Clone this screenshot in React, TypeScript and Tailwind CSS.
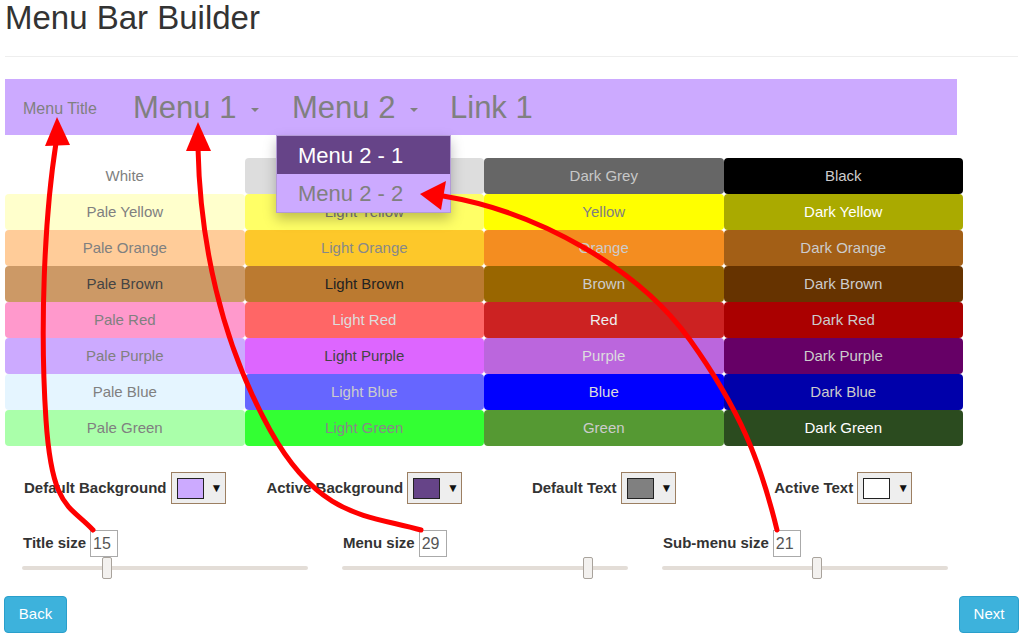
import React from "react";

type Cell = { name: string; bg: string; fg: string };

const cells: Cell[] = [
  { name: "White", bg: "bg-[#ffffff]", fg: "text-[#808080]" },
  { name: "Light Grey", bg: "bg-[#dddddd]", fg: "text-[#808080]" },
  { name: "Dark Grey", bg: "bg-[#666666]", fg: "text-[#c8c8c8]" },
  { name: "Black", bg: "bg-[#000000]", fg: "text-[#cccccc]" },
  { name: "Pale Yellow", bg: "bg-[#ffffcc]", fg: "text-[#808080]" },
  { name: "Light Yellow", bg: "bg-[#ffff66]", fg: "text-[#808080]" },
  { name: "Yellow", bg: "bg-[#ffff00]", fg: "text-[#808080]" },
  { name: "Dark Yellow", bg: "bg-[#aaaa00]", fg: "text-[#ffffff]" },
  { name: "Pale Orange", bg: "bg-[#ffcc99]", fg: "text-[#808080]" },
  { name: "Light Orange", bg: "bg-[#fdc82a]", fg: "text-[#888888]" },
  { name: "Orange", bg: "bg-[#f48d20]", fg: "text-[#cccccc]" },
  { name: "Dark Orange", bg: "bg-[#a35f16]", fg: "text-[#cccccc]" },
  { name: "Pale Brown", bg: "bg-[#cc9966]", fg: "text-[#444444]" },
  { name: "Light Brown", bg: "bg-[#bb7a30]", fg: "text-[#222222]" },
  { name: "Brown", bg: "bg-[#996600]", fg: "text-[#cccccc]" },
  { name: "Dark Brown", bg: "bg-[#663300]", fg: "text-[#cccccc]" },
  { name: "Pale Red", bg: "bg-[#ff99cc]", fg: "text-[#808080]" },
  { name: "Light Red", bg: "bg-[#ff6666]", fg: "text-[#dddddd]" },
  { name: "Red", bg: "bg-[#cc2222]", fg: "text-[#eeeeee]" },
  { name: "Dark Red", bg: "bg-[#aa0000]", fg: "text-[#cccccc]" },
  { name: "Pale Purple", bg: "bg-[#ccaaff]", fg: "text-[#808080]" },
  { name: "Light Purple", bg: "bg-[#dd66ff]", fg: "text-[#444444]" },
  { name: "Purple", bg: "bg-[#bb66dd]", fg: "text-[#dddddd]" },
  { name: "Dark Purple", bg: "bg-[#660066]", fg: "text-[#cccccc]" },
  { name: "Pale Blue", bg: "bg-[#e5f5ff]", fg: "text-[#808080]" },
  { name: "Light Blue", bg: "bg-[#6666ff]", fg: "text-[#cccccc]" },
  { name: "Blue", bg: "bg-[#0000ff]", fg: "text-[#dddddd]" },
  { name: "Dark Blue", bg: "bg-[#0000aa]", fg: "text-[#cccccc]" },
  { name: "Pale Green", bg: "bg-[#aaffaa]", fg: "text-[#808080]" },
  { name: "Light Green", bg: "bg-[#33ff33]", fg: "text-[#888888]" },
  { name: "Green", bg: "bg-[#559933]", fg: "text-[#cccccc]" },
  { name: "Dark Green", bg: "bg-[#2b4b1f]", fg: "text-[#ffffff]" },
];

function Caret() {
  return (
    <span className="inline-block w-0 h-0 border-t-[4px] border-t-[#808080] border-x-[4px] border-x-transparent ml-[15px] mt-[2px]" />
  );
}

function ColorPick({ label, swatch }: { label: string; swatch: string }) {
  return (
    <div className="flex items-center justify-center gap-[4px]">
      <span className="font-bold text-[15px] text-[#333]">{label}</span>
      <div className="w-[55px] h-[32px] border border-[#9c7f62] bg-[#eeeeee] flex items-center pl-[5px]">
        <div className={`w-[27px] h-[21px] border border-[#222] ${swatch}`} />
        <span className="ml-[7px] text-[12px] text-[#111] leading-none">▼</span>
      </div>
    </div>
  );
}

function SizeSlider({ label, value, thumb }: { label: string; value: string; thumb: string }) {
  return (
    <div className="px-[17px]">
      <div className="flex items-center h-[27px] pl-[1px] gap-[4px]">
        <span className="font-bold text-[15px] text-[#333]">{label}</span>
        <div className="w-[28px] h-[27px] border border-[#aaaaaa] text-[16px] text-[#555] pl-[2px] flex items-center">
          {value}
        </div>
      </div>
      <div className="relative h-[22px]">
        <div className="absolute left-0 right-0 top-[9px] h-[4px] bg-[#e3ddd7] rounded-[2px]" />
        <div className={`absolute top-0 w-[10px] h-[22px] bg-[#f3f1ef] border border-[#a9a39c] rounded-[2px] ${thumb}`} />
      </div>
    </div>
  );
}

export default function App() {
  return (
    <div className="relative w-[1023px] h-[636px] overflow-hidden bg-white px-[5px] font-['Liberation_Sans',Arial,sans-serif]">
      <h1 className="text-[33px] leading-[36px] text-[#333] font-normal">Menu Bar Builder</h1>
      <div className="mt-[20px] border-t border-[#eeeeee]" />

      <div className="mt-[22px] relative w-[952px] h-[56px] bg-[#ccaaff] flex items-center pt-[3px] text-[#808080]">
        <div className="w-[128px] pl-[18px] text-[16px]">Menu Title</div>
        <div className="w-[159px] flex items-center text-[31px]">
          <span>Menu 1</span>
          <Caret />
        </div>
        <div className="w-[158px] flex items-center text-[31px]">
          <span>Menu 2</span>
          <Caret />
        </div>
        <div className="text-[31px]">Link 1</div>

        <div className="absolute top-[56px] left-[271px] w-[175px] border border-[#b39ad6] shadow-[0_6px_12px_rgba(0,0,0,0.25)] z-10">
          <div className="h-[38px] flex items-center pl-[21px] text-[22px] bg-[#664488] text-white">Menu 2 - 1</div>
          <div className="h-[38px] flex items-center pl-[21px] text-[22px] bg-[#ccaaff] text-[#808080]">Menu 2 - 2</div>
        </div>
      </div>

      <div className="mt-[23px] grid grid-cols-4 w-[958px]">
        {cells.map((c) => (
          <div
            key={c.name}
            className={`h-[36px] flex items-center justify-center rounded-[4px] text-[15px] ${c.bg} ${c.fg}`}
          >
            {c.name}
          </div>
        ))}
      </div>

      <div className="mt-[26px] grid grid-cols-4 w-[958px]">
        <ColorPick label="Default Background" swatch="bg-[#ccaaff]" />
        <ColorPick label="Active Background" swatch="bg-[#664488]" />
        <ColorPick label="Default Text" swatch="bg-[#808080]" />
        <ColorPick label="Active Text" swatch="bg-[#ffffff]" />
      </div>

      <div className="mt-[26px] grid grid-cols-3 w-[960px]">
        <SizeSlider label="Title size" value="15" thumb="left-[80px]" />
        <SizeSlider label="Menu size" value="29" thumb="left-[241px]" />
        <SizeSlider label="Sub-menu size" value="21" thumb="left-[150px]" />
      </div>

      <div className="mt-[17px] flex justify-between">
        <button className="-ml-[1px] w-[63px] h-[37px] rounded-[4px] border border-[#2a9fcb] bg-[#3db2dc] text-white text-[15px]">
          Back
        </button>
        <button className="-mr-[1px] w-[60px] h-[37px] rounded-[4px] border border-[#2a9fcb] bg-[#3db2dc] text-white text-[15px]">
          Next
        </button>
      </div>

      <svg
        className="absolute left-0 top-0 pointer-events-none z-20"
        width="1023"
        height="636"
        viewBox="0 0 1023 636"
      >
        <g fill="none" stroke="#ff0000" strokeWidth="5" strokeLinecap="round">
          <path d="M56 143 C 44 220 40 330 46 420 S 70 505 93 530" />
          <path d="M198 148 C 200 240 220 340 270 430 S 370 515 421 530" />
          <path d="M443 196 C 540 212 640 270 690 340 S 760 460 777 530" />
        </g>
        <g fill="#ff0000">
          <polygon points="57,117 45,146 70,145" />
          <polygon points="198,122 186,151 211,151" />
          <polygon points="420,194 446,181 441,210" />
        </g>
      </svg>
    </div>
  );
}
